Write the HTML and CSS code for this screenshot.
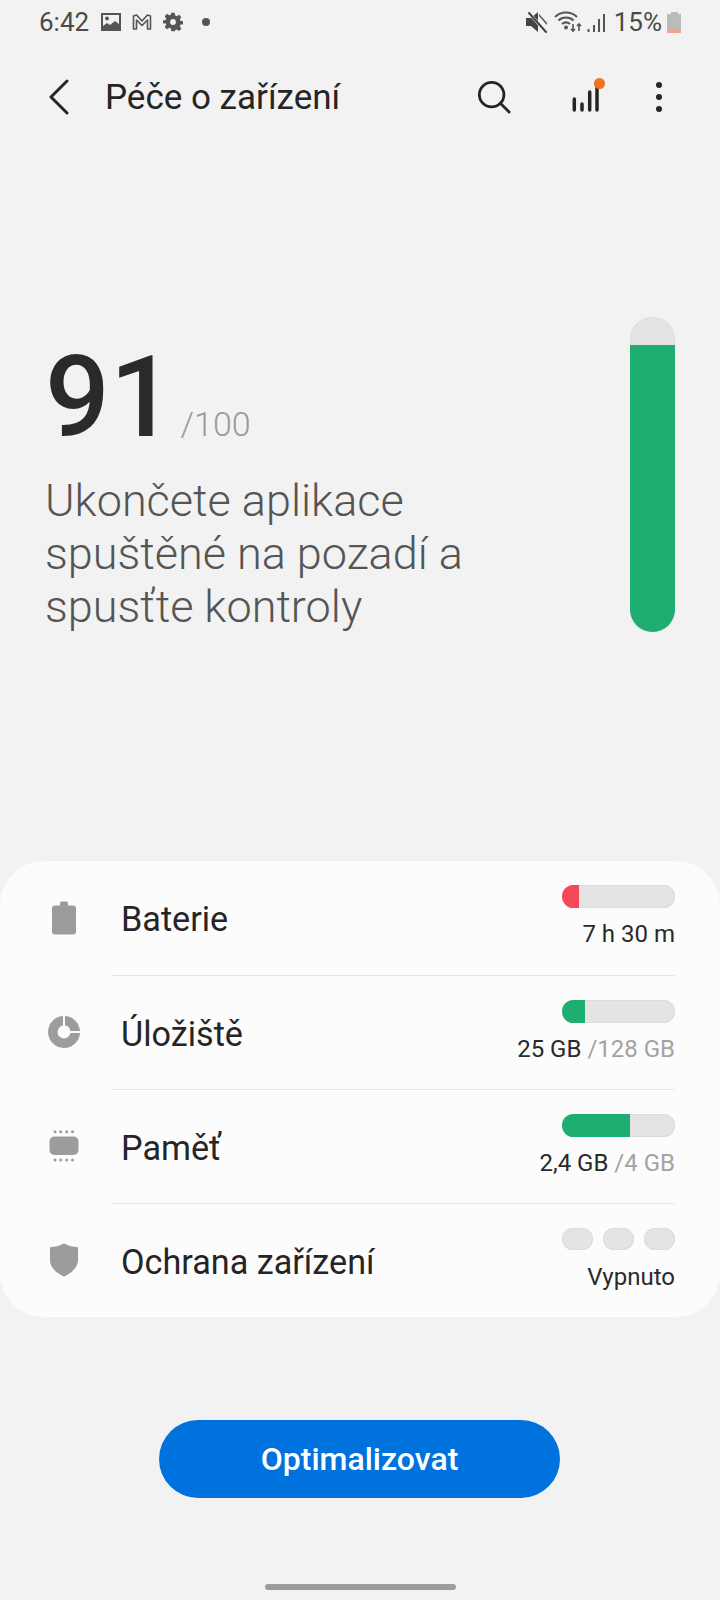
FILE: index.html
```html
<!DOCTYPE html>
<html lang="cs">
<head>
    <meta charset="UTF-8">
    <meta name="viewport" content="width=device-width, initial-scale=1.0">
    <title>Péče o zařízení</title>
    <link rel="stylesheet" href="styles.css">
</head>
<body>
    <div class="screen">
        <div class="status-bar">
            <div class="status-left">
                <span class="clock">6:42</span>
                <svg class="notif-icon" viewBox="0 0 20 20"><path fill="#555" d="M0 1h20v18H0z"/><path fill="#f2f2f2" d="M2 3h16v9l-4-3-5 4-3-2-4 3z"/><circle cx="6" cy="6.500" r="2" fill="#555"/></svg>
                <svg class="notif-icon" viewBox="0 0 20 20"><path fill="none" stroke="#555" stroke-width="1.600" stroke-linejoin="round" d="M1.500 17V4l3-1 5.500 6 5.500-6 3 1v13h-3V8l-5.500 5.500L4.500 8v9z"/></svg>
                <svg class="notif-icon" viewBox="0 0 24 24"><path fill="#555" fill-rule="evenodd" d="M10 1h4l.6 3.200 1.800.8 2.800-1.800 2.800 2.800-1.800 2.800.7 1.800 3.100.6v3.600l-3.100.6-.7 1.800 1.800 2.800-2.800 2.800-2.800-1.800-1.800.8L14 23h-4l-.6-3.200-1.800-.8-2.800 1.800-2.800-2.800 1.800-2.800-.7-1.800L0 13.800v-3.600l3.100-.6.700-1.800L2 5l2.800-2.800 2.800 1.800 1.800-.8zM12 8.500a3.500 3.500 0 1 0 0 7 3.500 3.500 0 0 0 0-7z"/></svg>
                <span class="notif-dot"></span>
            </div>
            <div class="status-right">
                <svg class="mute-icon" viewBox="0 0 22 22"><path fill="#444" d="M0 7h5l7-6v20l-7-6H0z"/><path fill="#444" d="M13 5l8 9v-2l-8-9z"/><path stroke="#f2f2f2" stroke-width="3" d="M2 1l18 20"/><path stroke="#444" stroke-width="2" stroke-linecap="round" d="M3 2l17 19"/></svg>
                <svg class="wifi-icon" viewBox="0 0 28 22"><g fill="none" stroke="#555" stroke-width="2.200"><path d="M1 6c6-6 16-6 22 0"/><path d="M4.500 9.500c4-4 11-4 15 0"/><path d="M8 13c2.500-2 5.500-2 8 0"/></g><circle cx="12" cy="16.500" r="2" fill="#555"/><path stroke="#555" stroke-width="1.600" d="M19 13v7m-2-2l2 2 2-2M25 20v-7m-2 2l2-2 2 2" fill="none"/></svg>
                <svg class="signal-icon" viewBox="0 0 20 22"><path stroke="#555" stroke-width="2" d="M2.500 21v-3M8 21v-7M13 21V8M18 21V3"/></svg>
                <span class="battery-text">15%</span>
                <div class="battery-icon">
                    <span class="battery-cap"></span>
                    <span class="battery-body"></span>
                </div>
            </div>
        </div>

        <header class="app-bar">
            <svg class="back-icon" viewBox="0 0 22 36"><path fill="none" stroke="#252525" stroke-width="3" stroke-linecap="round" stroke-linejoin="round" d="M19 2L3 18l16 16"/></svg>
            <h1 class="app-title">Péče o zařízení</h1>
            <svg class="search-icon" viewBox="0 0 36 36"><circle cx="15.500" cy="15.500" r="13" fill="none" stroke="#252525" stroke-width="3"/><path stroke="#252525" stroke-width="3" stroke-linecap="round" d="M25 25l9 9"/></svg>
            <div class="stats-button">
                <svg class="stats-icon" viewBox="0 0 30 36"><path stroke="#252525" stroke-width="3.500" stroke-linecap="round" d="M2.300 31V20M10 31V25M17.700 31V13M25 31V3"/></svg>
                <span class="stats-badge"></span>
            </div>
            <div class="more-button">
                <span></span><span></span><span></span>
            </div>
        </header>

        <section class="score">
            <div class="score-text">
                <div class="score-line">
                    <span class="score-value">91</span>
                    <span class="score-max">/100</span>
                </div>
                <p class="score-desc">Ukončete aplikace spuštěné na pozadí a spusťte kontroly</p>
            </div>
            <div class="score-bar"><div class="score-fill"></div></div>
        </section>

        <section class="card">
            <div class="row">
                <div class="row-icon">
                    <svg viewBox="0 0 34 34"><path fill="#9c9c9c" d="M13 2q0-1.500 1.500-1.500h5Q21 .5 21 2v2.500h5q3 0 3 3v23q0 3-3 3H8q-3 0-3-3v-23q0-3 3-3h5z"/></svg>
                </div>
                <div class="row-body">
                    <span class="row-label">Baterie</span>
                    <div class="row-info">
                        <div class="meter"><div class="meter-fill meter-red fill-battery"></div></div>
                        <span class="row-value">7 h 30 m</span>
                    </div>
                </div>
            </div>
            <div class="row">
                <div class="row-icon">
                    <svg viewBox="0 0 34 34"><path fill="#9c9c9c" d="M16 1v9.600a6.500 6.500 0 1 0 7.400 7.400H33A16 16 0 1 1 16 1z"/><path fill="#9c9c9c" d="M18 1A16 16 0 0 1 33 16H23.400A6.500 6.500 0 0 0 18 10.600z"/></svg>
                </div>
                <div class="row-body">
                    <span class="row-label">Úložiště</span>
                    <div class="row-info">
                        <div class="meter"><div class="meter-fill meter-green fill-storage"></div></div>
                        <span class="row-value">25 GB <span class="row-total">/128 GB</span></span>
                    </div>
                </div>
            </div>
            <div class="row">
                <div class="row-icon">
                    <svg viewBox="0 0 34 34"><rect x="2.500" y="7.500" width="29" height="18.500" rx="5" fill="#9c9c9c"/><g fill="#9c9c9c"><circle cx="8" cy="2.700" r="1.500"/><circle cx="13.700" cy="2.700" r="1.500"/><circle cx="19.700" cy="2.700" r="1.500"/><circle cx="25.500" cy="2.700" r="1.500"/><circle cx="8" cy="31" r="1.500"/><circle cx="13.700" cy="31" r="1.500"/><circle cx="19.700" cy="31" r="1.500"/><circle cx="25.500" cy="31" r="1.500"/></g></svg>
                </div>
                <div class="row-body">
                    <span class="row-label">Paměť</span>
                    <div class="row-info">
                        <div class="meter"><div class="meter-fill meter-green fill-memory"></div></div>
                        <span class="row-value">2,4 GB <span class="row-total">/4 GB</span></span>
                    </div>
                </div>
            </div>
            <div class="row">
                <div class="row-icon">
                    <svg viewBox="0 0 34 34"><path fill="#9c9c9c" d="M17 .5q7 3.500 13 3.500q1 0 1 1v12c0 7-6 13-14 16.500C9 30 3 24 3 17V5q0-1 1-1Q10 4 17 .5z"/></svg>
                </div>
                <div class="row-body">
                    <span class="row-label">Ochrana zařízení</span>
                    <div class="row-info">
                        <div class="pills"><span></span><span></span><span></span></div>
                        <span class="row-value">Vypnuto</span>
                    </div>
                </div>
            </div>
        </section>

        <div class="actions">
            <button class="optimize-btn">Optimalizovat</button>
        </div>

        <div class="home-bar"></div>
    </div>
</body>
</html>
```

FILE: styles.css
```css
* {
    margin: 0;
    padding: 0;
    box-sizing: border-box;
}

body {
    font-family: Roboto, "Noto Sans", sans-serif;
    background: #f2f2f2;
    color: #252525;
}

.screen {
    width: 720px;
    height: 1600px;
    display: flex;
    flex-direction: column;
    overflow: hidden;
}

/* status bar */
.status-bar {
    height: 47px;
    padding: 0 39px 3px 39px;
    display: flex;
    align-items: center;
    justify-content: space-between;
}

.status-left,
.status-right {
    display: flex;
    align-items: center;
}

.clock {
    font-size: 26px;
    color: #4a4a4a;
    margin-right: 12px;
}

.notif-icon {
    width: 20px;
    height: 20px;
    margin-right: 11px;
}

.notif-dot {
    width: 8px;
    height: 8px;
    margin-left: 8px;
    border-radius: 50%;
    background: #555;
}

.mute-icon {
    width: 22px;
    height: 22px;
    margin-right: 6px;
}

.wifi-icon {
    width: 28px;
    height: 22px;
    margin-right: 4px;
}

.signal-icon {
    width: 20px;
    height: 22px;
    margin-right: 8px;
}

.battery-text {
    font-size: 26px;
    color: #4a4a4a;
    margin-right: 5px;
}

.battery-icon {
    width: 14px;
    display: flex;
    flex-direction: column;
    align-items: center;
}

.battery-cap {
    width: 7px;
    height: 2px;
    background: #bbb;
}

.battery-body {
    width: 14px;
    height: 19px;
    background: linear-gradient(#bbb 0 15px, #f0a58e 15px);
}

/* app bar */
.app-bar {
    height: 102px;
    padding: 0 58px 2px 48px;
    display: flex;
    align-items: center;
}

.back-icon {
    width: 22px;
    height: 36px;
}

.app-title {
    flex: 1;
    margin-left: 35px;
    font-size: 35px;
    font-weight: 400;
}

.search-icon {
    width: 34px;
    height: 34px;
    margin-right: 61px;
}

.stats-button {
    position: relative;
    width: 30px;
    height: 36px;
    margin-right: 54px;
}

.stats-icon {
    width: 30px;
    height: 36px;
}

.stats-badge {
    position: absolute;
    top: -1px;
    right: -3px;
    width: 11px;
    height: 11px;
    border-radius: 50%;
    background: #f2711c;
}

.more-button {
    display: flex;
    flex-direction: column;
    gap: 6px;
}

.more-button span {
    width: 6px;
    height: 6px;
    border-radius: 50%;
    background: #252525;
}

/* score */
.score {
    height: 712px;
    padding: 168px 45px 0 45px;
    display: flex;
    justify-content: space-between;
}

.score-text {
    padding-top: 9px;
}

.score-line {
    display: flex;
    align-items: baseline;
    height: 142px;
}

.score-value {
    font-size: 114px;
    font-weight: 500;
    line-height: 142px;
    color: #2a2a2a;
}

.score-max {
    margin-left: 6px;
    font-size: 34px;
    font-weight: 300;
    color: #9a9a9a;
}

.score-desc {
    width: 450px;
    margin-top: 6px;
    font-size: 45px;
    font-weight: 300;
    line-height: 53px;
    color: #555;
}

.score-bar {
    width: 45px;
    height: 315px;
    border-radius: 23px;
    background: #e4e4e4;
    box-shadow: inset 0 0 0 1px #dcdcdc;
    overflow: hidden;
    display: flex;
    flex-direction: column;
    justify-content: flex-end;
}

.score-fill {
    height: 91%;
    background: #1fae72;
}

/* card */
.card {
    height: 456px;
    border-radius: 44px;
    background: #fcfcfc;
    display: flex;
    flex-direction: column;
}

.row {
    flex: 1;
    display: flex;
    align-items: stretch;
}

.row-icon {
    width: 112px;
    display: flex;
    align-items: center;
    justify-content: center;
    padding-left: 15px;
}

.row-icon svg {
    height: 34px;
    width: 34px;
}

.row-body {
    flex: 1;
    margin-right: 45px;
    padding-left: 9px;
    display: flex;
    align-items: center;
    justify-content: space-between;
    border-top: 1px solid #e6e6e6;
}

.row:first-child .row-body {
    border-top: none;
}

.row-label {
    padding-top: 2px;
    font-size: 34.2px;
    color: #252525;
}

.row-info {
    display: flex;
    flex-direction: column;
    align-items: flex-end;
    gap: 12px;
    padding-bottom: 3px;
}

.meter {
    width: 113px;
    height: 23px;
    border-radius: 12px;
    background: #e4e4e4;
    box-shadow: inset 0 0 0 1px #dcdcdc;
    overflow: hidden;
}

.meter-fill {
    height: 100%;
}

.meter-red {
    background: #f5485a;
}

.meter-green {
    background: #1fae72;
}

.fill-battery {
    width: 15%;
}

.fill-storage {
    width: 20%;
}

.fill-memory {
    width: 60%;
}

.pills {
    width: 113px;
    height: 23px;
    display: flex;
    gap: 10px;
}

.pills span {
    flex: 1;
    height: 22px;
    border-radius: 11px;
    background: #e4e4e4;
    box-shadow: inset 0 0 0 1px #dcdcdc;
}

.row-value {
    font-size: 24px;
    color: #2a2a2a;
}

.row-total {
    color: #a3a3a3;
}

/* bottom */
.actions {
    margin-top: 103px;
    padding-right: 1px;
    display: flex;
    justify-content: center;
}

.optimize-btn {
    width: 401px;
    height: 78px;
    border: none;
    border-radius: 39px;
    background: #0072de;
    color: #fff;
    font-family: inherit;
    font-size: 32px;
    font-weight: 500;
}

.home-bar {
    width: 191px;
    height: 6px;
    margin: 86px 0 0 265px;
    border-radius: 3px;
    background: #9c9c9c;
}
```
